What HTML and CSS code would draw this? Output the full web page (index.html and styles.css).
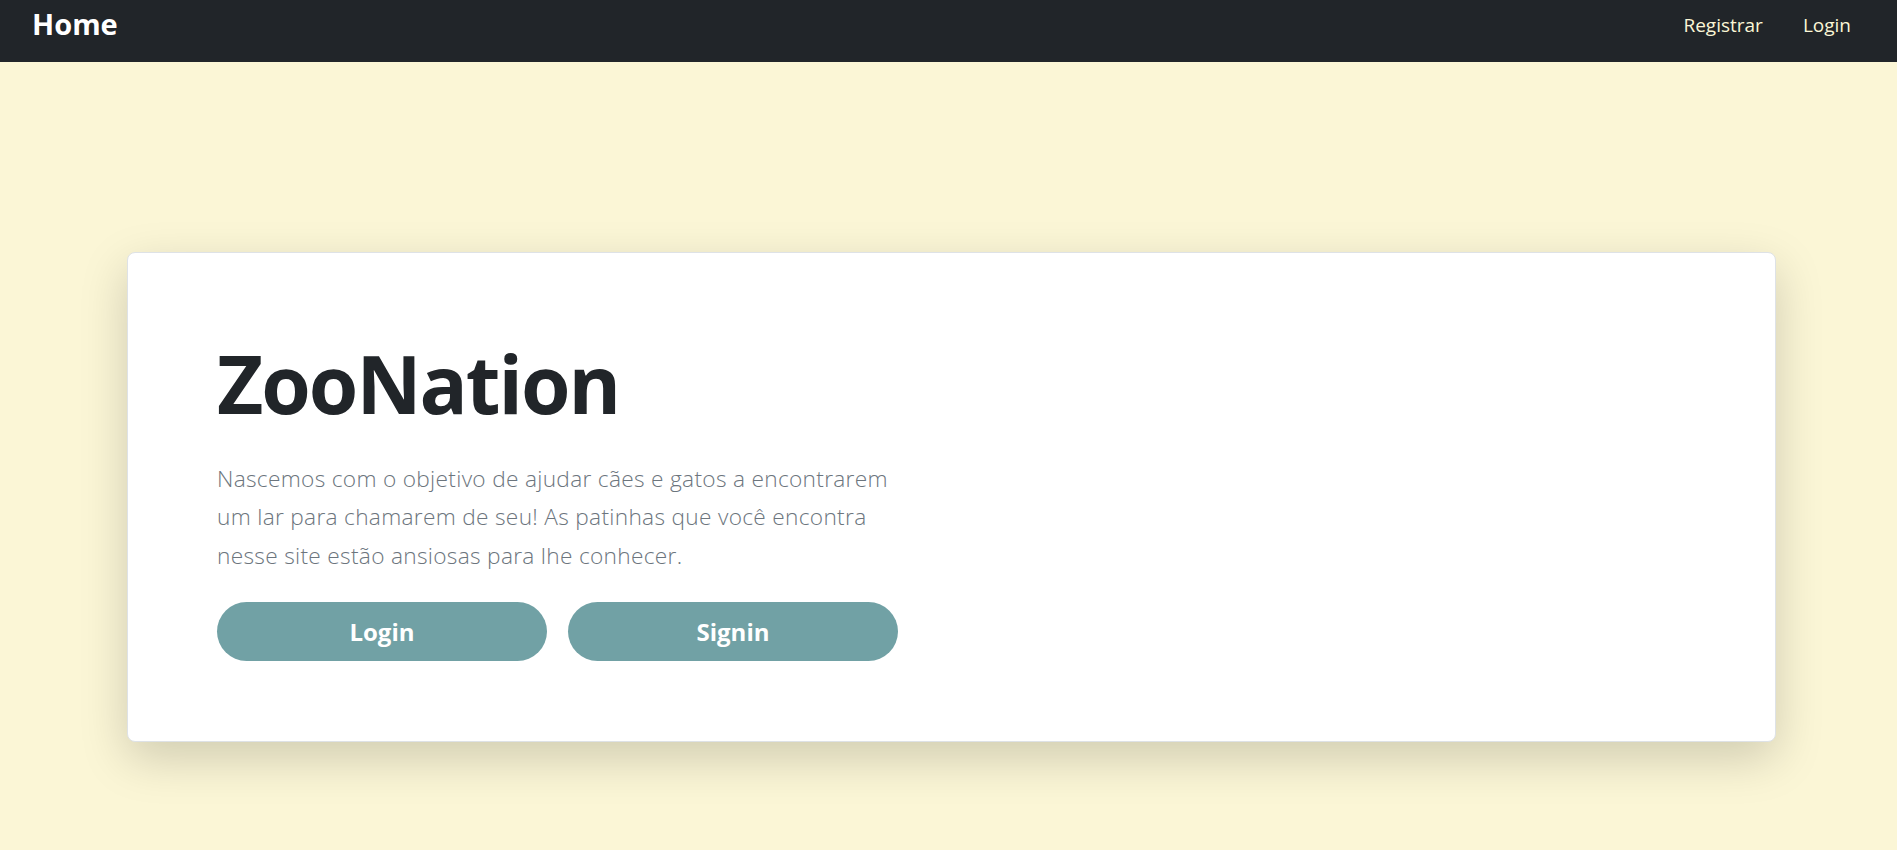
FILE: index.html
```html
<!DOCTYPE html>
<html lang="pt-BR">
<head>
<meta charset="utf-8">
<title>ZooNation</title>
<link rel="stylesheet" href="styles.css">
</head>
<body>
<nav class="navbar">
  <a class="brand" href="#">Home</a>
  <div class="nav-links">
    <a class="nav-link" href="#">Registrar</a>
    <a class="nav-link" href="#">Login</a>
  </div>
</nav>
<main class="main">
  <section class="hero">
    <div class="hero-text">
      <h1 class="hero-title">ZooNation</h1>
      <p class="hero-lead">Nascemos com o objetivo de ajudar cães e gatos a encontrarem um lar para chamarem de seu! As patinhas que você encontra nesse site estão ansiosas para lhe conhecer.</p>
      <div class="hero-actions">
        <button class="btn" type="button">Login</button>
        <button class="btn" type="button">Signin</button>
      </div>
    </div>
  </section>
</main>
</body>
</html>
```
FILE: styles.css
```css
* { box-sizing: border-box; }
html, body { margin: 0; padding: 0; }
body {
  background: #fbf6d6;
  font-family: "Open Sans", "Noto Sans", sans-serif;
  color: #212529;
  min-height: 850px;
}
.navbar {
  height: 62px;
  background: #212529;
  display: flex;
  align-items: flex-start;
  justify-content: space-between;
  padding: 0 26px 0 32px;
}
.brand {
  margin-top: 4px;
  color: #ffffff;
  font-weight: 700;
  font-size: 29px;
  text-decoration: none;
}
.nav-links {
  display: flex;
  margin-top: 12px;
}
.nav-link {
  color: #fbf6d6;
  font-size: 19px;
  text-decoration: none;
  padding: 0 20px;
}
.main {
  padding: 190px 0 0 127px;
}
.hero {
  width: 1649px;
  background: #ffffff;
  border: 1px solid #dee2e6;
  border-radius: 8px;
  box-shadow: 0 16px 48px rgba(0, 0, 0, 0.175);
  padding: 90px 89px 80px;
}
.hero-text { width: 682px; }
.hero-title {
  margin: 0;
  font-size: 80px;
  line-height: 80px;
  font-weight: 700;
  letter-spacing: -2px;
  color: #212529;
}
.hero-lead {
  margin: 36.5px 0 26.8px;
  font-size: 22.7px;
  line-height: 38.5px;
  font-weight: 300;
  color: #6c757d;
  letter-spacing: 0.3px;
}
.hero-actions {
  display: flex;
  gap: 21px;
}
.btn {
  width: 330px;
  height: 59px;
  border: none;
  border-radius: 30px;
  background: #71a1a5;
  color: #ffffff;
  font-family: "Open Sans", "Noto Sans", sans-serif;
  font-weight: 700;
  font-size: 24px;
  padding: 0;
}
```
